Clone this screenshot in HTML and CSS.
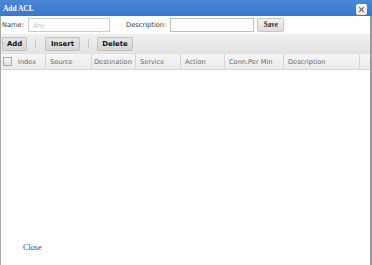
FILE: index.html
```html
<!DOCTYPE html>
<html lang="en">
<head>
    <meta charset="UTF-8">
    <title>Add ACL</title>
    <link rel="stylesheet" href="styles.css">
</head>
<body>

    <div class="dialog">
        <div class="titlebar">
            <span class="title">Add ACL</span>
            <span class="close-x">
                <svg width="11" height="11" viewBox="0 0 11 11">
                    <path d="M3.2 3.2 L7.8 7.8 M7.8 3.2 L3.2 7.8" stroke="#666" stroke-width="1.2"/>
                </svg>
            </span>
        </div>

        <div class="dialog-body">
            <div class="form-row">
                <label class="lbl">Name:</label>
                <input type="text" class="name-input" placeholder="Any">
                <label class="lbl desc-lbl">Description:</label>
                <input type="text" class="desc-input">
                <button class="save-btn">Save</button>
            </div>

            <div class="toolbar">
                <button class="tool-btn add-btn">Add</button>
                <span class="sep"></span>
                <button class="tool-btn insert-btn">Insert</button>
                <span class="sep"></span>
                <button class="tool-btn delete-btn">Delete</button>
            </div>

            <div class="grid-head">
                <div class="col col-check"><span class="checkbox"></span></div>
                <div class="col col-index">Index</div>
                <div class="col col-source">Source</div>
                <div class="col col-dest">Destination</div>
                <div class="col col-service">Service</div>
                <div class="col col-action">Action</div>
                <div class="col col-conn">Conn.Per Min</div>
                <div class="col col-desc">Description</div>
                <div class="col col-last"></div>
            </div>

            <div class="grid-body"></div>

            <div class="footer">
                <a class="close-link">Close</a>
            </div>
        </div>
    </div>

</body>
</html>
```

FILE: styles.css
```css
body {
    margin: 0;
    background: white;
    font-family: "DejaVu Sans", Verdana, sans-serif;
}

.dialog {
    width: 372px;
    height: 265px;
    display: flex;
    flex-direction: column;
}

.titlebar {
    height: 16px;
    background: linear-gradient(#4a88d6, #3a77cb);
    display: flex;
    align-items: center;
    justify-content: space-between;
    padding: 0 5px 0 3px;
    flex-shrink: 0;
}

.title {
    font-family: "Liberation Serif", "Times New Roman", serif;
    font-weight: bold;
    font-size: 7.4px;
    color: white;
    margin-top: 1px;
}

.close-x {
    width: 11px;
    height: 11px;
    background: linear-gradient(#ffffff, #e2e2e2);
    border-radius: 2px;
    display: flex;
    margin-top: 3px;
}

.dialog-body {
    flex: 1;
    border-left: 1px solid #a8a8a8;
    border-right: 2px solid #9a9a9a;
    display: flex;
    flex-direction: column;
}

.form-row {
    height: 18px;
    display: flex;
    align-items: center;
    padding-left: 1px;
}

.lbl {
    font-size: 6.7px;
    color: #3a3a3a;
}

.name-input {
    width: 82px;
    height: 14px;
    margin-left: 4px;
    border: 1px solid #cdcdcd;
    padding: 0 4px;
    font-size: 6.5px;
    box-sizing: border-box;
}

.name-input::placeholder {
    color: #c4c4c4;
}

.desc-lbl {
    margin-left: 16px;
}

.desc-input {
    width: 84px;
    height: 14px;
    margin-left: 4px;
    border: 1px solid #bcbcbc;
    box-sizing: border-box;
}

.save-btn {
    margin-left: 3px;
    width: 27px;
    height: 14px;
    padding: 0;
    font-family: "Liberation Serif", "Times New Roman", serif;
    font-weight: bold;
    font-size: 7.2px;
    color: #333;
    background: linear-gradient(#f2f2f2, #dcdcdc);
    border: 1px solid #c4c4c4;
    border-radius: 2px;
}

.toolbar {
    height: 19px;
    background: linear-gradient(#efefef, #e4e4e4);
    display: flex;
    align-items: center;
    padding-left: 1px;
}

.tool-btn {
    height: 14px;
    padding: 0 4px;
    font-family: "DejaVu Sans", Verdana, sans-serif;
    font-weight: bold;
    font-size: 6.9px;
    color: #111;
    background: linear-gradient(#e6e6e6, #d4d4d4);
    border: 1px solid #c2c2c2;
    border-radius: 1px;
}

.add-btn { width: 25px; }
.insert-btn { width: 35px; }
.delete-btn { width: 36px; }

.sep {
    width: 1px;
    height: 9px;
    background: #c8c8c8;
    margin: 0 9px 0 8px;
}

.delete-btn {
    margin-left: -1px;
}

.grid-head {
    height: 15px;
    display: flex;
    background: linear-gradient(#f6f6f6, #eaeaea);
    border-top: 1px solid #e0e0e0;
    border-bottom: 1px solid #d8d8d8;
}

.col {
    font-size: 6.6px;
    color: #666;
    display: flex;
    align-items: center;
    padding-left: 4px;
    border-right: 1px solid #d6d6d6;
    box-sizing: border-box;
}

.col-check {
    width: 13px;
    padding-left: 2px;
    border-right: none;
}

.checkbox {
    width: 7px;
    height: 7px;
    border: 1px solid #a8a8a8;
    background: linear-gradient(#f8f8f8, #e0e0e0);
}

.col-index { width: 32px; }
.col-source { width: 46px; }
.col-dest { width: 44px; padding-left: 2px; }
.col-service { width: 45px; }
.col-action { width: 44px; }
.col-conn { width: 59px; }
.col-desc { width: 76px; }
.col-last { flex: 1; border-right: none; }

.grid-body {
    flex: 1;
}

.footer {
    height: 30px;
    padding-left: 22px;
}

.close-link {
    font-family: "Liberation Serif", "Times New Roman", serif;
    font-size: 8.2px;
    color: #2a4f88;
}
```
